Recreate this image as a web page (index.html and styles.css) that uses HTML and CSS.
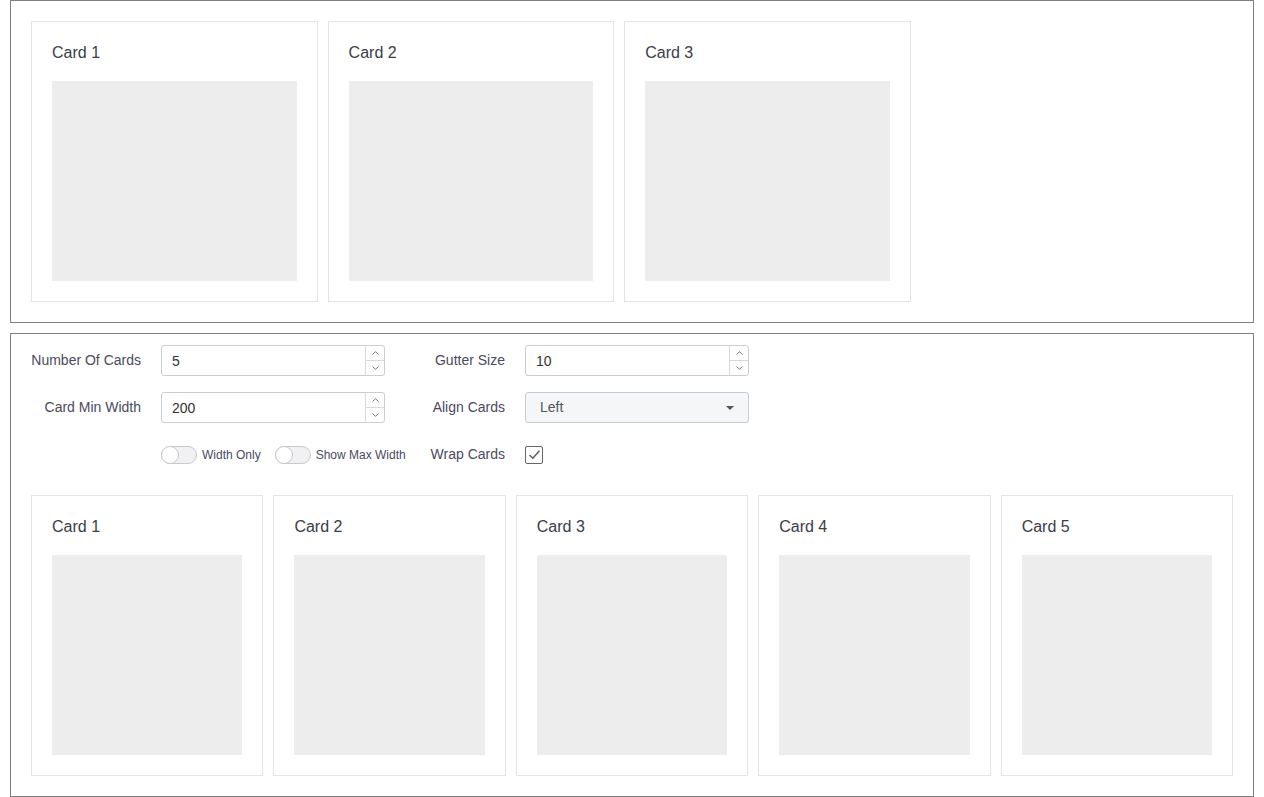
FILE: index.html
```html
<!DOCTYPE html>
<html>
<head>
<meta charset="utf-8">
<link rel="stylesheet" href="styles.css">
</head>
<body>
<div class="panel">
  <div class="cards cards-top">
    <div class="card"><div class="card-title">Card 1</div><div class="card-body"></div></div>
    <div class="card"><div class="card-title">Card 2</div><div class="card-body"></div></div>
    <div class="card"><div class="card-title">Card 3</div><div class="card-body"></div></div>
  </div>
</div>
<div class="panel panel-bottom">
  <div class="controls">
    <label class="lbl">Number Of Cards</label>
    <div class="num-input"><span class="val">5</span><div class="spin"><span class="up"><svg width="7" height="4" viewBox="0 0 7 4"><path d="M0.5 3.5 L3.5 0.8 L6.5 3.5" fill="none" stroke="#777" stroke-width="1"/></svg></span><span class="down"><svg width="7" height="4" viewBox="0 0 7 4"><path d="M0.5 0.5 L3.5 3.2 L6.5 0.5" fill="none" stroke="#777" stroke-width="1"/></svg></span></div></div>
    <label class="lbl">Gutter Size</label>
    <div class="num-input"><span class="val">10</span><div class="spin"><span class="up"><svg width="7" height="4" viewBox="0 0 7 4"><path d="M0.5 3.5 L3.5 0.8 L6.5 3.5" fill="none" stroke="#777" stroke-width="1"/></svg></span><span class="down"><svg width="7" height="4" viewBox="0 0 7 4"><path d="M0.5 0.5 L3.5 3.2 L6.5 0.5" fill="none" stroke="#777" stroke-width="1"/></svg></span></div></div>

    <label class="lbl">Card Min Width</label>
    <div class="num-input"><span class="val">200</span><div class="spin"><span class="up"><svg width="7" height="4" viewBox="0 0 7 4"><path d="M0.5 3.5 L3.5 0.8 L6.5 3.5" fill="none" stroke="#777" stroke-width="1"/></svg></span><span class="down"><svg width="7" height="4" viewBox="0 0 7 4"><path d="M0.5 0.5 L3.5 3.2 L6.5 0.5" fill="none" stroke="#777" stroke-width="1"/></svg></span></div></div>
    <label class="lbl">Align Cards</label>
    <div class="select"><span class="val">Left</span><span class="caret"></span></div>

    <span></span>
    <div class="toggles">
      <span class="toggle"><span class="knob"></span></span><span class="tlabel">Width Only</span>
      <span class="toggle second"><span class="knob"></span></span><span class="tlabel">Show Max Width</span>
    </div>
    <label class="lbl">Wrap Cards</label>
    <div class="chk-wrap"><span class="checkbox"><svg width="13" height="11" viewBox="0 0 13 11"><path d="M1.5 6 L4.8 9.2 L11.5 1.8" fill="none" stroke="#555" stroke-width="1.3"/></svg></span></div>
  </div>
  <div class="cards cards-bottom">
    <div class="card"><div class="card-title">Card 1</div><div class="card-body"></div></div>
    <div class="card"><div class="card-title">Card 2</div><div class="card-body"></div></div>
    <div class="card"><div class="card-title">Card 3</div><div class="card-body"></div></div>
    <div class="card"><div class="card-title">Card 4</div><div class="card-body"></div></div>
    <div class="card"><div class="card-title">Card 5</div><div class="card-body"></div></div>
  </div>
</div>
</body>
</html>
```
FILE: styles.css
```css
* { box-sizing: border-box; }
html, body { margin: 0; padding: 0; background: #fff; }
body {
  padding: 0 10px;
  font-family: "Liberation Sans", Arial, sans-serif;
  color: #333;
}
.panel {
  border: 1px solid #808080;
  padding: 20px;
}
.panel-bottom {
  margin-top: 10px;
  padding-top: 11px;
}
.cards { display: flex; gap: 10px; }
.card {
  border: 1px solid #e1e5e9;
  padding: 20px;
  background: #fff;
}
.cards-top .card { width: 286.6px; flex: none; }
.cards-bottom .card { flex: 1 1 0; min-width: 200px; }
.card-title {
  font-size: 16px;
  line-height: 22px;
  height: 22px;
  margin-bottom: 17px;
  color: #3a3d47;
}
.card-body { height: 200px; background: #ededed; }

.controls {
  display: grid;
  grid-template-columns: 110px 224px 100px 224px;
  grid-template-rows: 31px 31px 31px;
  column-gap: 20px;
  row-gap: 16px;
  margin-bottom: 25px;
  align-items: center;
}
.lbl {
  text-align: right;
  font-size: 14px;
  color: #4b4a5e;
  white-space: nowrap;
  padding-bottom: 2px;
}
.num-input {
  height: 31px;
  border: 1px solid #c9cdd4;
  border-radius: 3px;
  display: flex;
  align-items: center;
  background: #fff;
}
.num-input .val {
  flex: 1;
  padding-left: 10px;
  font-size: 14px;
  color: #333;
}
.spin {
  width: 19px;
  align-self: stretch;
  border-left: 1px solid #d6d9de;
  display: flex;
  flex-direction: column;
}
.spin span {
  flex: 1;
  display: flex;
  align-items: center;
  justify-content: center;
}
.spin .up { border-bottom: 1px solid #d6d9de; }
.select {
  height: 31px;
  border: 1px solid #c6cbd3;
  border-radius: 3px;
  background: #f5f6f8;
  display: flex;
  align-items: center;
  padding: 0 14px 0 14px;
}
.select .val { flex: 1; font-size: 14px; color: #555; padding-bottom: 1px; }
.caret {
  width: 0; height: 0;
  border-left: 4px solid transparent;
  border-right: 4px solid transparent;
  border-top: 4px solid #555;
}
.toggles {
  display: flex;
  align-items: center;
  white-space: nowrap;
}
.toggle {
  flex: none;
  width: 36px;
  height: 18px;
  border: 1px solid #c8c9ce;
  border-radius: 9px;
  background: #f1f1f3;
  display: inline-flex;
  align-items: center;
  position: relative;
}
.toggle .knob {
  flex: none;
  width: 18px;
  height: 18px;
  border: 1px solid #c8c9ce;
  border-radius: 50%;
  background: #fff;
  margin-left: -1px;
}
.toggle.second { margin-left: 14px; }
.tlabel {
  flex: none;
  font-size: 12px;
  color: #4b4a5e;
  margin-left: 5px;
  padding-top: 1px;
}
.chk-wrap { display: flex; align-items: center; }
.checkbox {
  width: 18px;
  height: 18px;
  border: 1px solid #666;
  border-radius: 2px;
  display: flex;
  align-items: center;
  justify-content: center;
  background: #fff;
}
```
